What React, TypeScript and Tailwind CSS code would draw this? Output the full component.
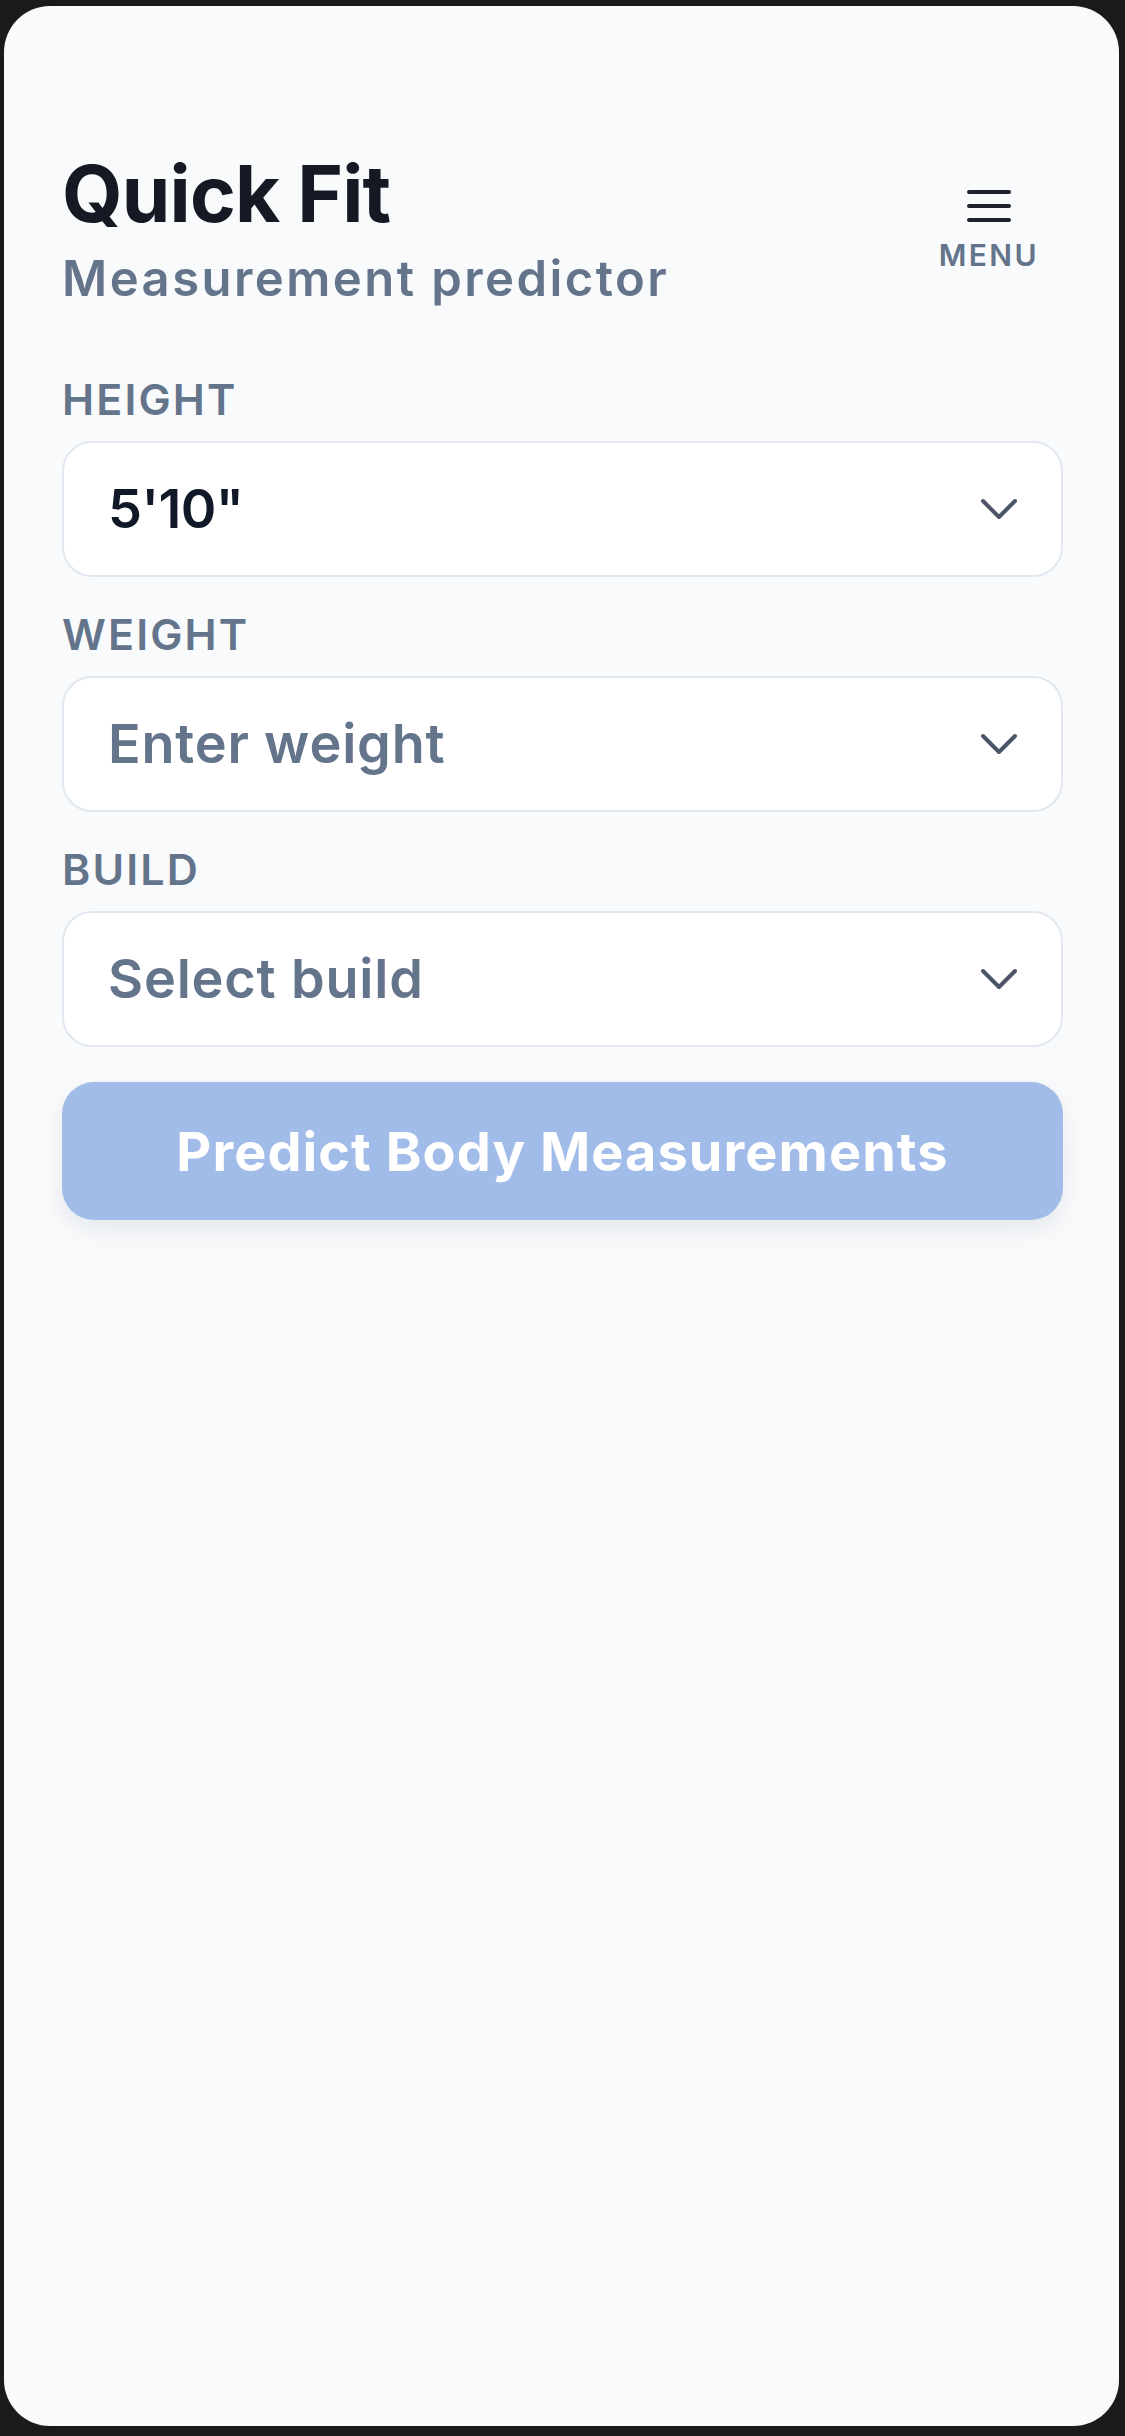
import { useState } from "react";

const fields = [
  { label: "HEIGHT", value: "5'10\"", placeholder: false },
  { label: "WEIGHT", value: "Enter weight", placeholder: true },
  { label: "BUILD", value: "Select build", placeholder: true },
];

function Chevron() {
  return (
    <svg width="36" height="22" viewBox="0 0 36 22" fill="none" className="shrink-0">
      <path d="M2 3 L18 19 L34 3" stroke="#4b5567" strokeWidth="4" strokeLinecap="round" strokeLinejoin="round" />
    </svg>
  );
}

function SelectField({ label, value, placeholder }: { label: string; value: string; placeholder: boolean }) {
  return (
    <div className="flex flex-col">
      <span className="text-[43px] leading-[52px] font-semibold tracking-[0.05em] text-[#64748b]">{label}</span>
      <button className="mt-[16px] h-[136px] w-full flex items-center justify-between rounded-[30px] border-[2.5px] border-[#e2e8f0] bg-white pl-[44px] pr-[44px]">
        <span
          className={
            placeholder
              ? "text-[54px] leading-[64px] font-semibold tracking-[0.015em] text-[#64748b]"
              : "text-[54px] leading-[64px] font-semibold tracking-[-0.01em] text-[#111827]"
          }
        >
          {value}
        </span>
        <Chevron />
      </button>
    </div>
  );
}

export default function App() {
  const [open, setOpen] = useState(false);

  return (
    <div
      className="w-[1125px] h-[2436px] bg-[#1a1a1a] pt-[6px] pl-[4px] pr-[6px] pb-[10px]"
      style={{ fontFamily: "Inter, 'Noto Sans', sans-serif" }}
    >
      <div className="h-full rounded-[46px] bg-[#f8fafc] pt-[149px] pl-[58px] pr-[56px]">
        {/* Header */}
        <header className="flex items-start justify-between">
          <div>
            <h1 className="text-[78px] leading-[78px] font-bold tracking-[-0.01em] text-[#151923]">Quick Fit</h1>
            <p className="mt-[18px] text-[49px] leading-[56px] font-semibold tracking-[0.05em] text-[#64748b]">
              Measurement predictor
            </p>
          </div>
          <button onClick={() => setOpen(!open)} className="mt-[33px] flex flex-col items-center px-[24px]">
            <svg width="48" height="36" viewBox="0 0 48 36" fill="none">
              <path d="M4 4 H44 M4 18 H44 M4 32 H44" stroke="#1e222b" strokeWidth="4" strokeLinecap="round" />
            </svg>
            <span className="mt-[13px] text-[30px] leading-[36px] font-semibold tracking-[0.08em] text-[#64748b]">MENU</span>
          </button>
        </header>

        {/* Form */}
        <div className="mt-[66px] flex flex-col gap-[31px]">
          {fields.map((f) => (
            <SelectField key={f.label} label={f.label} value={f.value} placeholder={f.placeholder} />
          ))}
        </div>

        <button className="mt-[35px] h-[138px] w-full rounded-[32px] bg-[#a1bce8] shadow-[0_10px_24px_rgba(15,23,42,0.08)] text-[54px] font-bold tracking-[0.02em] text-white">
          Predict Body Measurements
        </button>
      </div>
    </div>
  );
}
